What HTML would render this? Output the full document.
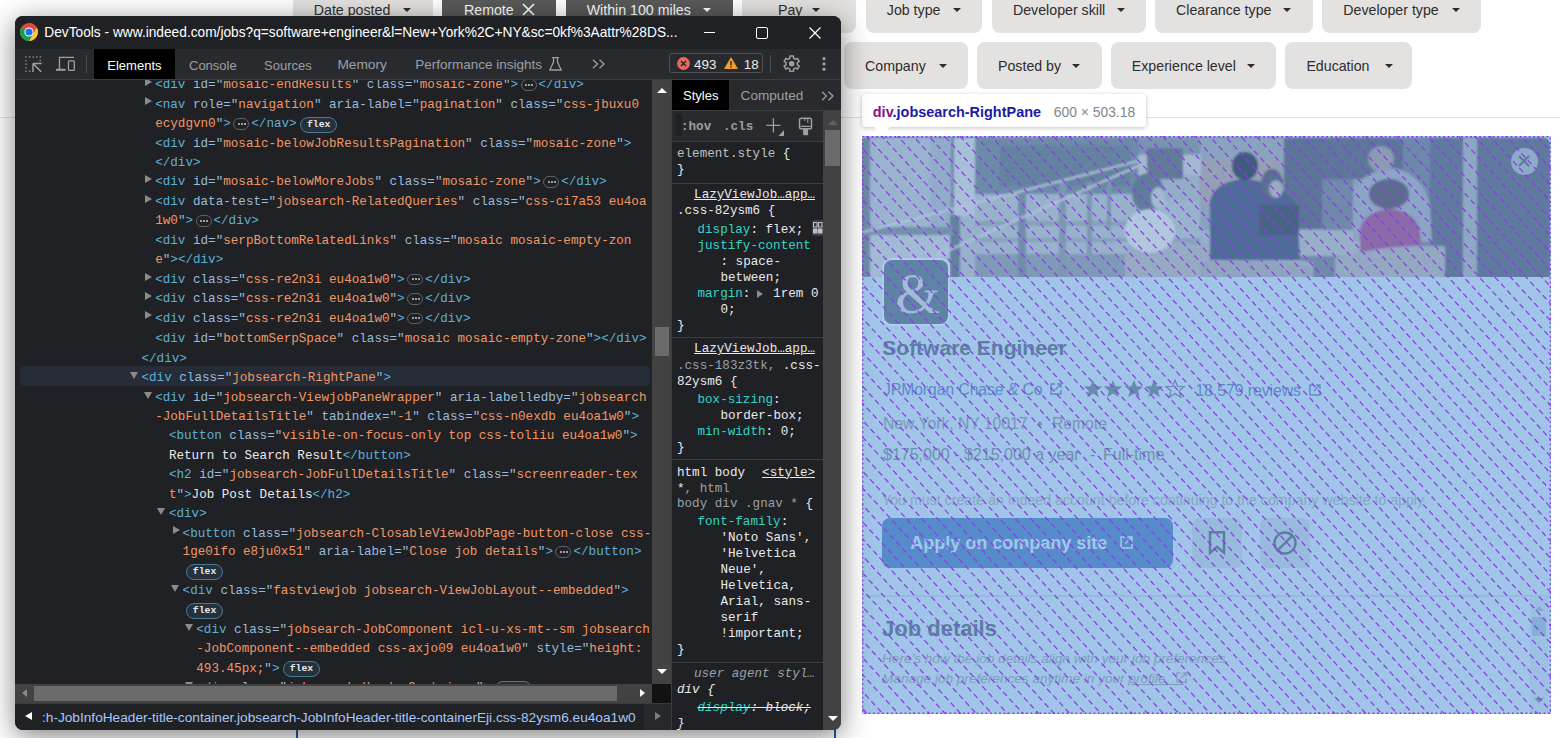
<!DOCTYPE html>
<html><head><meta charset="utf-8"><title>DevTools</title>
<style>
*{box-sizing:border-box;margin:0;padding:0}
html,body{width:1560px;height:738px;overflow:hidden;background:#fff;position:relative;font-family:"Liberation Sans",sans-serif}
.a{position:absolute}
/* page chips */
.chip{position:absolute;height:47px;background:#e4e2e0;border-radius:8px;color:#2d2d2d;font-size:14.2px;white-space:nowrap}
.chip .t{position:absolute;top:0;line-height:1}
.chip .c{position:absolute;width:0;height:0;border-left:4px solid transparent;border-right:4px solid transparent;border-top:4.5px solid #2d2d2d}
.chip.sel{background:#595959;color:#fff}
.hline{position:absolute;left:0;top:117px;width:1560px;height:1px;background:#e4e2e0}
/* job pane */
.pane{position:absolute;left:862px;top:136px;width:689px;height:578px;background:#a0c5e8;overflow:hidden}
.photo{position:absolute;left:0;top:1px;width:688px;height:140px;border-radius:6px 8px 0 0;overflow:hidden;background:#7f9dbd}
.tip{position:absolute;left:862px;top:94px;width:284px;height:33px;background:#fff;border-radius:3px;box-shadow:0 1px 4px rgba(0,0,0,.25);white-space:nowrap}
.tip .n{position:absolute;left:10.8px;top:10px;font-weight:bold;font-size:14.45px;color:#1a1aa6}
.tip .n i{font-style:normal;color:#881280}
.tip .d{position:absolute;left:191.7px;top:10px;font-size:13.9px;color:#80868b}
.arrow{position:absolute;left:874px;top:127px;width:0;height:0;border-left:8.5px solid transparent;border-right:8.5px solid transparent;border-top:9px solid #fff}
/* devtools */
.win{position:absolute;left:15px;top:16px;width:826px;height:714px;background:#202124;border-radius:8px;overflow:hidden;box-shadow:0 6px 28px rgba(0,0,0,.5)}
.mono{font-family:"Liberation Mono",monospace;font-size:12.6px}
.ln{position:absolute;white-space:pre;font-family:"Liberation Mono",monospace;font-size:12.6px;line-height:19.45px;height:19.45px}
.tg{color:#5db0d7}.an{color:#9bbbdc}.av{color:#f29766}.tx{color:#e8eaed}
.tri{position:absolute;width:0;height:0}
.tri.r{border-top:4px solid transparent;border-bottom:4px solid transparent;border-left:7px solid #8b8b8b}
.tri.d{border-left:4px solid transparent;border-right:4px solid transparent;border-bottom:0;border-top:7px solid #8b8b8b}
.ell{display:inline-block;vertical-align:top;width:16px;height:11.5px;border:1px solid #5f6368;border-radius:6px;margin:3px 2px 0 2.5px;position:relative}
.ell:before{content:"";position:absolute;left:3.5px;top:3.5px;width:2px;height:2px;background:#9aa0a6;box-shadow:3px 0 #9aa0a6,6px 0 #9aa0a6}
.flex{display:inline-block;vertical-align:top;width:37px;height:16px;border:1px solid #4a7a97;background:#25313b;border-radius:8px;color:#e8eaed;font-family:"Liberation Mono",monospace;font-size:9.8px;font-weight:bold;line-height:14px;text-align:center;margin:1.4px 0 0 3.5px}
.sl{position:absolute;white-space:pre;font-family:"Liberation Mono",monospace;font-size:12.6px;line-height:16px;height:16px;color:#e8eaed}
.pn{color:#35d4c7}.gr{color:#9aa0a6}

</style></head>
<body>
<div class="chip" style="left:293.3px;top:-14.2px;width:139.5px"><span class="t" style="left:20.5px;top:17.2px">Date posted</span><span class="c" style="left:109.7px;top:21.7px;border-top-color:#2d2d2d"></span></div>
<div class="chip sel" style="left:442px;top:-14.2px;width:114.0px"><span class="t" style="left:22.0px;top:17.2px">Remote</span><svg class="a" style="left:80px;top:17.5px" width="13" height="13" viewBox="0 0 13 13"><path d="M1 1L12 12M12 1L1 12" stroke="#fff" stroke-width="1.6"/></svg></div>
<div class="chip sel" style="left:566px;top:-14.2px;width:167.0px"><span class="t" style="left:20.7px;top:17.2px">Within 100 miles</span><span class="c" style="left:136.6px;top:21.7px;border-top-color:#fff"></span></div>
<div class="chip" style="left:742px;top:-14.2px;width:114.0px"><span class="t" style="left:36.0px;top:17.2px">Pay</span><span class="c" style="left:70.0px;top:21.7px;border-top-color:#2d2d2d"></span></div>
<div class="chip" style="left:866.3px;top:-14.2px;width:115.7px"><span class="t" style="left:20.5px;top:17.2px">Job type</span><span class="c" style="left:86.7px;top:21.7px;border-top-color:#2d2d2d"></span></div>
<div class="chip" style="left:991.8px;top:-14.2px;width:154.2px"><span class="t" style="left:21.2px;top:17.2px">Developer skill</span><span class="c" style="left:125.2px;top:21.7px;border-top-color:#2d2d2d"></span></div>
<div class="chip" style="left:1155px;top:-14.2px;width:158.0px"><span class="t" style="left:21.0px;top:17.2px">Clearance type</span><span class="c" style="left:128.0px;top:21.7px;border-top-color:#2d2d2d"></span></div>
<div class="chip" style="left:1322px;top:-14.2px;width:159.0px"><span class="t" style="left:21.3px;top:17.2px">Developer type</span><span class="c" style="left:130.0px;top:21.7px;border-top-color:#2d2d2d"></span></div>
<div class="chip" style="left:844px;top:42px;width:124.0px"><span class="t" style="left:21.0px;top:17.2px">Company</span><span class="c" style="left:95.0px;top:21.7px;border-top-color:#2d2d2d"></span></div>
<div class="chip" style="left:977px;top:42px;width:125.0px"><span class="t" style="left:21.0px;top:17.2px">Posted by</span><span class="c" style="left:95.0px;top:21.7px;border-top-color:#2d2d2d"></span></div>
<div class="chip" style="left:1111px;top:42px;width:165.0px"><span class="t" style="left:20.8px;top:17.2px">Experience level</span><span class="c" style="left:135.6px;top:21.7px;border-top-color:#2d2d2d"></span></div>
<div class="chip" style="left:1285px;top:42px;width:126.7px"><span class="t" style="left:21.4px;top:17.2px">Education</span><span class="c" style="left:100.0px;top:21.7px;border-top-color:#2d2d2d"></span></div>
<div class="hline"></div>
<div class="a" style="left:296px;top:700px;width:1.5px;height:40px;background:#2557a7"></div>
<div class="a" style="left:834px;top:700px;width:1.5px;height:40px;background:#2557a7"></div><div class="pane">
<div class="photo"><svg class="a" style="left:0;top:1px" width="688" height="140" viewBox="862 137 688 140"><defs><filter id="bl" x="-5%" y="-5%" width="110%" height="110%"><feGaussianBlur stdDeviation="1.3"/></filter></defs><g filter="url(#bl)"><rect x="862" y="137" width="688" height="140" fill="#86a2be"/><rect x="862" y="137" width="8" height="140" fill="#6d8aa8"/><rect x="870" y="137" width="60" height="89" fill="#9ab4cf"/><rect x="930" y="137" width="21" height="89" fill="#90acc9"/><rect x="951" y="137" width="3" height="140" fill="#6f8cab"/><rect x="954" y="137" width="21" height="78" fill="#a7c0d8"/><rect x="950" y="215" width="10" height="62" fill="#62809f"/><rect x="862" y="226" width="92" height="8" fill="#7390ae"/><rect x="870" y="234" width="80" height="43" fill="#a2bad3"/><rect x="960" y="215" width="15" height="62" fill="#98b1cb"/><rect x="975" y="137" width="164" height="56" fill="#6c8ba9"/><rect x="1000" y="145" width="130" height="40" fill="#64839f"/><rect x="975" y="193" width="164" height="84" fill="#98b2cc"/><rect x="975" y="220" width="153" height="5" fill="#86a1bd"/><rect x="975" y="237" width="153" height="4" fill="#86a1bd"/><rect x="975" y="253" width="153" height="24" fill="#7f9ab7"/><rect x="1018" y="193" width="8" height="84" fill="#6f8cab"/><rect x="1059" y="181" width="7" height="96" fill="#7b96b3"/><rect x="1087" y="181" width="5" height="72" fill="#7b96b3"/><rect x="1107" y="181" width="4" height="49" fill="#7b96b3"/><rect x="1139" y="137" width="61" height="16" fill="#7994b1"/><rect x="1139" y="174" width="61" height="26" fill="#94adc7"/><rect x="1139" y="200" width="61" height="37" fill="#9ab3cc"/><rect x="1200" y="137" width="85" height="23" fill="#8aa4bf"/><rect x="1201" y="158" width="81" height="47" fill="#94a0b4"/><rect x="1138" y="154" width="63" height="20" fill="#a3b8cf"/><rect x="1147" y="147" width="36" height="31" fill="#62799a"/><rect x="1284" y="137" width="38" height="91" fill="#5b7598"/><rect x="1322" y="137" width="81" height="41" fill="#5d769a"/><rect x="1322" y="178" width="31" height="52" fill="#6f88aa"/><rect x="1403" y="137" width="27" height="140" fill="#6e88ab"/><rect x="1430" y="137" width="33" height="140" fill="#60799e"/><rect x="1463" y="137" width="14" height="140" fill="#8ea7c3"/><rect x="1477" y="137" width="73" height="140" fill="#5e799f"/><rect x="1259" y="204" width="40" height="28" fill="#4f6a8f"/><rect x="1200" y="229" width="166" height="26" fill="#98afc8"/><rect x="1200" y="255" width="136" height="22" fill="#6f89aa"/><path d="M1125 277V250Q1130 238 1160 240L1215 245Q1250 248 1313 262V277Z" fill="#95abc4"/><path d="M1210 259V200Q1215 180 1245 178Q1285 182 1297 205L1300 259Z" fill="#4e6c97"/><path d="M1259 204H1299V234H1259Z" fill="#4a6487"/><path d="M1353 241V195Q1360 168 1395 167Q1425 175 1430 205L1432 241Z" fill="#8ca5c5"/><path d="M1360 259V228Q1365 210 1390 208Q1415 210 1420 230L1422 259Z" fill="#8a6aa8"/><path d="M1335 277V258Q1380 243 1445 245V277Z" fill="#93a8c1"/><path d="M1200 277V262Q1240 255 1311 265V277Z" fill="#8ea4bf"/><ellipse cx="1148" cy="192" rx="16" ry="20" fill="#5f7b9b"/><ellipse cx="1158" cy="197" rx="7" ry="11" fill="#a3b9cf"/><ellipse cx="1150" cy="230" rx="25" ry="22" fill="#b0c7de"/><ellipse cx="1272" cy="183" rx="11" ry="15" fill="#5a6f90"/><ellipse cx="1276" cy="188" rx="7" ry="9" fill="#9aaac0"/><ellipse cx="1245" cy="165" rx="13" ry="14" fill="#3f5a80"/><ellipse cx="1381" cy="158" rx="13" ry="13" fill="#8a9bb3"/><ellipse cx="1389" cy="193" rx="20" ry="15" fill="#5b6c8b"/><path d="M860 232L1138 160M936 255L1138 165" stroke="#adc4da" stroke-width="2" fill="none"/></g></svg>
<div class="a" style="left:648.5px;top:10.5px;width:27px;height:27px;border-radius:50%;background:#8eaacb"></div>
<svg class="a" style="left:656px;top:18px" width="12" height="12"><path d="M1 1L11 11M11 1L1 11" stroke="#5d7a9b" stroke-width="2"/></svg>
</div>
<div class="a" style="left:20.299999999999955px;top:121.80000000000001px;width:67.5px;height:67.8px;border-radius:9px;background:#b0cceb"></div>
<div class="a" style="left:22.299999999999955px;top:123.80000000000001px;width:63.5px;height:63.8px;border-radius:8px;background:#5f83a7;overflow:hidden"><span class="a" style="left:11px;top:5px;font-family:'Liberation Serif',serif;font-size:58px;line-height:1;color:#a2bcd7">&amp;</span></div>
<span class="a" style="left:20.3px;top:201.1px;font-size:21px;line-height:1;color:#5a7fa2;font-weight:bold;font-style:normal;white-space:nowrap;">Software Engineer</span>
<span class="a" style="left:21.0px;top:246.0px;font-size:15.6px;line-height:1;color:#5a8bc8;font-weight:normal;font-style:normal;white-space:nowrap;">JPMorgan Chase &amp; Co</span>
<svg class="a" style="left:188px;top:247px" width="12" height="12" viewBox="0 0 12 12"><path d="M5 1H1V11H11V7" stroke="#5a8bc8" stroke-width="1.4" fill="none"/><path d="M7 1H11V5M11 1L5 7" stroke="#5a8bc8" stroke-width="1.4" fill="none"/></svg>
<svg class="a" style="left:221.0px;top:243.3px" width="20" height="19" viewBox="0 0 20 19"><path d="M10 1.2L12.6 7.3L19.2 7.6L14.1 11.8L15.8 18.3L10 14.6L4.2 18.3L5.9 11.8L0.8 7.6L7.4 7.3Z" fill="#678cb0"/></svg>
<svg class="a" style="left:241.4px;top:243.3px" width="20" height="19" viewBox="0 0 20 19"><path d="M10 1.2L12.6 7.3L19.2 7.6L14.1 11.8L15.8 18.3L10 14.6L4.2 18.3L5.9 11.8L0.8 7.6L7.4 7.3Z" fill="#678cb0"/></svg>
<svg class="a" style="left:261.8px;top:243.3px" width="20" height="19" viewBox="0 0 20 19"><path d="M10 1.2L12.6 7.3L19.2 7.6L14.1 11.8L15.8 18.3L10 14.6L4.2 18.3L5.9 11.8L0.8 7.6L7.4 7.3Z" fill="#678cb0"/></svg>
<svg class="a" style="left:282.2px;top:243.3px" width="20" height="19" viewBox="0 0 20 19"><path d="M10 1.2L12.6 7.3L19.2 7.6L14.1 11.8L15.8 18.3L10 14.6L4.2 18.3L5.9 11.8L0.8 7.6L7.4 7.3Z" fill="#678cb0"/></svg>
<svg class="a" style="left:302.6px;top:243.3px" width="20" height="19" viewBox="0 0 20 19"><path d="M10 1.2L12.6 7.3L19.2 7.6L14.1 11.8L15.8 18.3L10 14.6L4.2 18.3L5.9 11.8L0.8 7.6L7.4 7.3Z" fill="none" stroke="#678cb0" stroke-width="1.3"/></svg>
<span class="a" style="left:333.4px;top:246.6px;font-size:15.7px;line-height:1;color:#5a8bc8;font-weight:normal;font-style:normal;white-space:nowrap;">18,579 reviews</span>
<svg class="a" style="left:447px;top:247.5px" width="12" height="12" viewBox="0 0 12 12"><path d="M5 1H1V11H11V7" stroke="#5a8bc8" stroke-width="1.4" fill="none"/><path d="M7 1H11V5M11 1L5 7" stroke="#5a8bc8" stroke-width="1.4" fill="none"/></svg>
<span class="a" style="left:21.0px;top:280.1px;font-size:15.7px;line-height:1;color:#7497b9;font-weight:normal;font-style:normal;white-space:nowrap;">New York, NY 10017</span>
<span class="a" style="left:175.0px;top:280.1px;font-size:15.7px;line-height:1;color:#7497b9;font-weight:normal;font-style:normal;white-space:nowrap;">•</span>
<span class="a" style="left:190.0px;top:280.1px;font-size:15.7px;line-height:1;color:#7497b9;font-weight:normal;font-style:normal;white-space:nowrap;">Remote</span>
<span class="a" style="left:21.0px;top:311.4px;font-size:16px;line-height:1;color:#6d90b3;font-weight:normal;font-style:normal;white-space:nowrap;">$175,000 - $215,000 a year</span>
<span class="a" style="left:228.0px;top:311.4px;font-size:16px;line-height:1;color:#6d90b3;font-weight:normal;font-style:normal;white-space:nowrap;">-</span>
<span class="a" style="left:241.0px;top:311.4px;font-size:16px;line-height:1;color:#6d90b3;font-weight:normal;font-style:normal;white-space:nowrap;">Full-time</span>
<span class="a" style="left:20.0px;top:356.7px;font-size:14.2px;line-height:1;color:#85a5c4;font-weight:normal;font-style:normal;white-space:nowrap;">You must create an Indeed account before continuing to the company website to apply</span>
<div class="a" style="left:20px;top:382px;width:291px;height:49.5px;border-radius:8px;background:#568cca"></div>
<span class="a" style="left:48.3px;top:398.2px;font-size:18px;line-height:1;color:#a3c7ea;font-weight:bold;font-style:normal;white-space:nowrap;">Apply on company site</span>
<svg class="a" style="left:258px;top:399.5px" width="13" height="13" viewBox="0 0 12 12"><path d="M5 1H1V11H11V7" stroke="#a3c7ea" stroke-width="1.4" fill="none"/><path d="M7 1H11V5M11 1L5 7" stroke="#a3c7ea" stroke-width="1.4" fill="none"/></svg>
<div class="a" style="left:330px;top:382px;width:50px;height:49.5px;border-radius:8px;background:#97badd"></div>
<div class="a" style="left:398px;top:382px;width:50px;height:49.5px;border-radius:8px;background:#97badd"></div>
<svg class="a" style="left:346px;top:394px" width="18" height="26" viewBox="0 0 18 26"><path d="M2 2.2H16V22.8L9 16.8L2 22.8Z" stroke="#5a7fa2" stroke-width="2.4" fill="none" stroke-linejoin="miter"/></svg>
<svg class="a" style="left:410px;top:394px" width="26" height="26" viewBox="0 0 26 26"><circle cx="13" cy="13" r="10.5" stroke="#5a7fa2" stroke-width="2.4" fill="none"/><path d="M5.6 20.4L20.4 5.6" stroke="#5a7fa2" stroke-width="2.4"/></svg>
<div class="a" style="left:0;top:458.5px;width:689px;height:2px;background:#96bade"></div>
<span class="a" style="left:20.0px;top:481.9px;font-size:22px;line-height:1;color:#5a7fa2;font-weight:bold;font-style:normal;white-space:nowrap;">Job details</span>
<span class="a" style="left:20.0px;top:515.9px;font-size:13.6px;line-height:1;color:#7d9dbd;font-weight:normal;font-style:italic;white-space:nowrap;">Here’s how the job details align with your job preferences.</span>
<span class="a" style="left:20.0px;top:536.2px;font-size:13.6px;line-height:1;color:#7d9dbd;font-weight:normal;font-style:italic;white-space:nowrap;">Manage job preferences anytime in your <u>profile&nbsp;&nbsp;&nbsp;&nbsp;&nbsp;</u>.</span>
<svg class="a" style="left:314px;top:535.5px" width="11" height="11" viewBox="0 0 12 12"><path d="M5 1H1V11H11V7" stroke="#7d9dbd" stroke-width="1.4" fill="none"/><path d="M7 1H11V5M11 1L5 7" stroke="#7d9dbd" stroke-width="1.4" fill="none"/></svg>
<div class="a" style="left:668px;top:460px;width:18px;height:117px;background:#9cc0e4"></div>
<div class="a" style="left:670px;top:481px;width:14px;height:19px;background:#87aed5"></div>
<div class="a" style="left:672px;top:470px;width:0;height:0;border-left:5px solid transparent;border-right:5px solid transparent;border-bottom:5px solid #82a7cd"></div>
<div class="a" style="left:672px;top:562px;width:0;height:0;border-left:5px solid transparent;border-right:5px solid transparent;border-top:5px solid #6f8fb1"></div>
<svg class="a" style="left:0;top:0" width="689" height="578"><g stroke="#8a3ee6" stroke-width="1.25" stroke-dasharray="5.6 3.535" fill="none"><path d="M-525.74 0L5.51 578" stroke-dashoffset="7.36"/><path d="M-510.15 0L21.10 578" stroke-dashoffset="8.78"/><path d="M-494.56 0L36.69 578" stroke-dashoffset="1.06"/><path d="M-478.97 0L52.28 578" stroke-dashoffset="2.47"/><path d="M-463.38 0L67.87 578" stroke-dashoffset="3.89"/><path d="M-447.79 0L83.46 578" stroke-dashoffset="5.30"/><path d="M-432.20 0L99.05 578" stroke-dashoffset="6.72"/><path d="M-416.61 0L114.64 578" stroke-dashoffset="8.13"/><path d="M-401.02 0L130.23 578" stroke-dashoffset="0.41"/><path d="M-385.43 0L145.82 578" stroke-dashoffset="1.82"/><path d="M-369.84 0L161.41 578" stroke-dashoffset="3.24"/><path d="M-354.25 0L177.00 578" stroke-dashoffset="4.65"/><path d="M-338.66 0L192.59 578" stroke-dashoffset="6.07"/><path d="M-323.07 0L208.18 578" stroke-dashoffset="7.48"/><path d="M-307.48 0L223.77 578" stroke-dashoffset="8.90"/><path d="M-291.89 0L239.36 578" stroke-dashoffset="1.18"/><path d="M-276.30 0L254.95 578" stroke-dashoffset="2.59"/><path d="M-260.71 0L270.54 578" stroke-dashoffset="4.01"/><path d="M-245.12 0L286.13 578" stroke-dashoffset="5.42"/><path d="M-229.53 0L301.72 578" stroke-dashoffset="6.84"/><path d="M-213.94 0L317.31 578" stroke-dashoffset="8.25"/><path d="M-198.35 0L332.90 578" stroke-dashoffset="0.53"/><path d="M-182.76 0L348.49 578" stroke-dashoffset="1.95"/><path d="M-167.17 0L364.08 578" stroke-dashoffset="3.36"/><path d="M-151.58 0L379.67 578" stroke-dashoffset="4.78"/><path d="M-135.99 0L395.26 578" stroke-dashoffset="6.19"/><path d="M-120.40 0L410.85 578" stroke-dashoffset="7.61"/><path d="M-104.81 0L426.44 578" stroke-dashoffset="9.02"/><path d="M-89.22 0L442.03 578" stroke-dashoffset="1.30"/><path d="M-73.63 0L457.62 578" stroke-dashoffset="2.72"/><path d="M-58.04 0L473.21 578" stroke-dashoffset="4.13"/><path d="M-42.45 0L488.80 578" stroke-dashoffset="5.55"/><path d="M-26.86 0L504.39 578" stroke-dashoffset="6.96"/><path d="M-11.27 0L519.98 578" stroke-dashoffset="8.38"/><path d="M4.32 0L535.57 578" stroke-dashoffset="0.66"/><path d="M19.91 0L551.16 578" stroke-dashoffset="2.07"/><path d="M35.50 0L566.75 578" stroke-dashoffset="3.49"/><path d="M51.09 0L582.34 578" stroke-dashoffset="4.90"/><path d="M66.68 0L597.93 578" stroke-dashoffset="6.31"/><path d="M82.27 0L613.52 578" stroke-dashoffset="7.73"/><path d="M97.86 0L629.11 578" stroke-dashoffset="0.01"/><path d="M113.45 0L644.70 578" stroke-dashoffset="1.42"/><path d="M129.04 0L660.29 578" stroke-dashoffset="2.84"/><path d="M144.63 0L675.88 578" stroke-dashoffset="4.25"/><path d="M160.22 0L691.47 578" stroke-dashoffset="5.67"/><path d="M175.81 0L707.06 578" stroke-dashoffset="7.08"/><path d="M191.40 0L722.65 578" stroke-dashoffset="8.50"/><path d="M206.99 0L738.24 578" stroke-dashoffset="0.78"/><path d="M222.58 0L753.83 578" stroke-dashoffset="2.19"/><path d="M238.17 0L769.42 578" stroke-dashoffset="3.61"/><path d="M253.76 0L785.01 578" stroke-dashoffset="5.02"/><path d="M269.35 0L800.60 578" stroke-dashoffset="6.44"/><path d="M284.94 0L816.19 578" stroke-dashoffset="7.85"/><path d="M300.53 0L831.78 578" stroke-dashoffset="0.13"/><path d="M316.12 0L847.37 578" stroke-dashoffset="1.55"/><path d="M331.71 0L862.96 578" stroke-dashoffset="2.96"/><path d="M347.30 0L878.55 578" stroke-dashoffset="4.38"/><path d="M362.89 0L894.14 578" stroke-dashoffset="5.79"/><path d="M378.48 0L909.73 578" stroke-dashoffset="7.21"/><path d="M394.07 0L925.32 578" stroke-dashoffset="8.62"/><path d="M409.66 0L940.91 578" stroke-dashoffset="0.90"/><path d="M425.25 0L956.50 578" stroke-dashoffset="2.32"/><path d="M440.84 0L972.09 578" stroke-dashoffset="3.73"/><path d="M456.43 0L987.68 578" stroke-dashoffset="5.15"/><path d="M472.02 0L1003.27 578" stroke-dashoffset="6.56"/><path d="M487.61 0L1018.86 578" stroke-dashoffset="7.98"/><path d="M503.20 0L1034.45 578" stroke-dashoffset="0.25"/><path d="M518.79 0L1050.04 578" stroke-dashoffset="1.67"/><path d="M534.38 0L1065.63 578" stroke-dashoffset="3.08"/><path d="M549.97 0L1081.22 578" stroke-dashoffset="4.50"/><path d="M565.56 0L1096.81 578" stroke-dashoffset="5.91"/><path d="M581.15 0L1112.40 578" stroke-dashoffset="7.33"/><path d="M596.74 0L1127.99 578" stroke-dashoffset="8.74"/><path d="M612.33 0L1143.58 578" stroke-dashoffset="1.02"/><path d="M627.92 0L1159.17 578" stroke-dashoffset="2.44"/><path d="M643.51 0L1174.76 578" stroke-dashoffset="3.85"/><path d="M659.10 0L1190.35 578" stroke-dashoffset="5.27"/><path d="M674.69 0L1205.94 578" stroke-dashoffset="6.68"/><path d="M690.28 0L1221.53 578" stroke-dashoffset="8.10"/></g><rect x="0.75" y="0.75" width="687.5" height="576.5" fill="none" stroke="#8a2be2" stroke-width="1.3" stroke-dasharray="1.6 2.9"/></svg>
</div>
<div class="tip"><span class="n"><i>div</i>.jobsearch-RightPane</span><span class="d">600 × 503.18</span></div><div class="arrow"></div><div class="win">
<div class="a" style="left:0;top:0;width:826px;height:33px;background:#202124"></div>
<svg class="a" style="left:5px;top:7px" width="18" height="18" viewBox="-9 -9 18 18"><circle r="9" fill="#dd4b3e"/><path d="M0 0L-7.79 4.5A9 9 0 0 1 -7.79 -4.5Z" fill="#1e9e4b"/><path d="M0 -9A9 9 0 0 1 7.79 -4.5L3.9 2.25L-3.9 -2.25A4.5 4.5 0 0 0 0 -4.5Z" fill="#dd4b3e"/><path d="M-7.79 -4.5L-3.9 2.25L0 9A9 9 0 0 1 -7.79 -4.5Z" fill="#1e9e4b"/><path d="M7.79 -4.5A9 9 0 0 1 0 9L3.9 2.25Z" fill="#fcc934"/><path d="M0 9L3.9 2.25L-3.9 2.25L-7.79 4.5A9 9 0 0 0 0 9Z" fill="#1e9e4b"/><circle r="4.6" fill="#fff"/><circle r="3.6" fill="#1a73e8"/></svg>
<div class="a" style="left:29.299999999999997px;top:9.2px;font-size:13.72px;line-height:normal;color:#fff;white-space:nowrap">DevTools - www.indeed.com/jobs?q=software+engineer&amp;l=New+York%2C+NY&amp;sc=0kf%3Aattr%28DS...</div>
<div class="a" style="left:689px;top:16px;width:11px;height:1.2px;background:#fff"></div>
<div class="a" style="left:741px;top:11px;width:12px;height:11.5px;border:1.2px solid #fff;border-radius:2px"></div>
<svg class="a" style="left:794px;top:11px" width="12" height="12"><path d="M0.5 0.5L11.5 11.5M11.5 0.5L0.5 11.5" stroke="#fff" stroke-width="1.2"/></svg>
<div class="a" style="left:0;top:33px;width:826px;height:30px;background:#292a2d"></div>
<div class="a" style="left:0;top:63px;width:826px;height:1px;background:#3c3d40"></div>
<svg class="a" style="left:10px;top:39.5px" width="18" height="17" viewBox="0 0 18 17"><g fill="#9aa0a6"><rect x="0.3" y="0.3" width="1.3" height="1.3"/><rect x="3.9" y="0.3" width="1.3" height="1.3"/><rect x="7.5" y="0.3" width="1.3" height="1.3"/><rect x="11.1" y="0.3" width="1.3" height="1.3"/><rect x="14.6" y="0.3" width="1.3" height="1.3"/><rect x="0.3" y="3.9" width="1.3" height="1.3"/><rect x="0.3" y="7.5" width="1.3" height="1.3"/><rect x="0.3" y="11.1" width="1.3" height="1.3"/><rect x="0.3" y="14.6" width="1.3" height="1.3"/><rect x="14.6" y="3.9" width="1.3" height="1.3"/><rect x="3.9" y="14.6" width="1.3" height="1.3"/></g><path d="M8 7.5H16.7M8 7.2V16M8.3 7.8L16.2 15.7" stroke="#9aa0a6" stroke-width="1.5" fill="none"/></svg>
<svg class="a" style="left:40px;top:40px" width="21" height="16" viewBox="0 0 21 16"><path d="M4.5 13V1.3H19" stroke="#9aa0a6" stroke-width="1.3" fill="none"/><rect x="1" y="12.8" width="9.5" height="2" fill="#9aa0a6"/><rect x="13.5" y="4.8" width="5.8" height="9.6" rx="1" stroke="#9aa0a6" stroke-width="1.3" fill="none"/></svg>
<div class="a" style="left:71px;top:39px;width:1px;height:18px;background:#4a4c50"></div>
<div class="a" style="left:79px;top:33px;width:81px;height:30px;background:#000"></div>
<div class="a" style="left:92.3px;top:41.6px;font-size:13px;line-height:normal;color:#fff;white-space:nowrap">Elements</div>
<div class="a" style="left:174px;top:41.6px;font-size:13px;line-height:normal;color:#9aa0a6;white-space:nowrap">Console</div>
<div class="a" style="left:249px;top:41.6px;font-size:13px;line-height:normal;color:#9aa0a6;white-space:nowrap">Sources</div>
<div class="a" style="left:322.4px;top:41.0px;font-size:13.7px;line-height:normal;color:#9aa0a6;white-space:nowrap">Memory</div>
<div class="a" style="left:400.3px;top:41.2px;font-size:13.5px;line-height:normal;color:#9aa0a6;white-space:nowrap">Performance insights</div>
<svg class="a" style="left:534px;top:41px" width="13" height="14" viewBox="0 0 13 14"><path d="M3 0.7H10M4.5 0.7V5L0.8 13H12.2L8.5 5V0.7" stroke="#9aa0a6" stroke-width="1.3" fill="none"/></svg>
<svg class="a" style="left:576.5px;top:43px" width="14" height="10" viewBox="0 0 14 10"><path d="M1 0.7L5.5 5L1 9.3M7.5 0.7L12 5L7.5 9.3" stroke="#9aa0a6" stroke-width="1.3" fill="none"/></svg>
<div class="a" style="left:654.2px;top:37.2px;width:93.5px;height:19.4px;border:1px solid #4d4f52;border-radius:3px"></div>
<svg class="a" style="left:661.5px;top:40.8px" width="13" height="13" viewBox="0 0 13 13"><circle cx="6.5" cy="6.5" r="6.4" fill="#e46962"/><path d="M4 4L9 9M9 4L4 9" stroke="#202124" stroke-width="1.3"/></svg>
<div class="a" style="left:679px;top:40.7px;font-size:13.4px;line-height:normal;color:#e8eaed">493</div>
<svg class="a" style="left:709px;top:41px" width="14" height="12" viewBox="0 0 14 12"><path d="M7 0L14 12H0Z" fill="#f0a030"/><rect x="6.3" y="4" width="1.4" height="4.3" fill="#202124"/><rect x="6.3" y="9.2" width="1.4" height="1.4" fill="#202124"/></svg>
<div class="a" style="left:728.7px;top:40.7px;font-size:13.4px;line-height:normal;color:#e8eaed">18</div>
<div class="a" style="left:755px;top:39px;width:1px;height:18px;background:#4a4c50"></div>
<svg class="a" style="left:767.9px;top:39px" width="17.4" height="17.4" viewBox="-8.7 -8.7 17.4 17.4"><path d="M-1.86 -5.39L-1.78 -7.70L1.78 -7.70L1.86 -5.39L2.85 -4.94L3.74 -4.30L5.78 -5.39L7.55 -2.31L5.60 -1.09L5.70 0.00L5.60 1.09L7.55 2.31L5.78 5.39L3.74 4.30L2.85 4.94L1.86 5.39L1.78 7.70L-1.78 7.70L-1.86 5.39L-2.85 4.94L-3.74 4.30L-5.78 5.39L-7.55 2.31L-5.60 1.09L-5.70 0.00L-5.60 -1.09L-7.55 -2.31L-5.78 -5.39L-3.74 -4.30L-2.85 -4.94Z" fill="none" stroke="#9aa0a6" stroke-width="1.5" stroke-linejoin="round"/><circle r="2.8" fill="#9aa0a6"/></svg>
<svg class="a" style="left:806.7px;top:40.6px" width="4" height="14" viewBox="0 0 4 14"><circle cx="2" cy="1.7" r="1.6" fill="#9aa0a6"/><circle cx="2" cy="6.9" r="1.6" fill="#9aa0a6"/><circle cx="2" cy="12.2" r="1.6" fill="#9aa0a6"/></svg><div class="a" style="left:0;top:64px;width:637px;height:604px;background:#202124;overflow:hidden">
<div class="a" style="left:5px;top:286.00px;width:630px;height:20px;border-radius:5px;background:#262c38"></div>
<div class="ln" style="left:140.20px;top:-3.79px"><span class="tg">&lt;div</span><span class="an"> </span><span class="an">id=</span><span class="an">"</span><span class="av">mosaic-endResults</span><span class="an">"</span><span class="an"> </span><span class="an">class=</span><span class="an">"</span><span class="av">mosaic-zone</span><span class="an">"</span><span class="tg">&gt;</span><span class="ell"></span><span class="tg">&lt;/div</span><span class="tg">&gt;</span></div>
<div class="tri r" style="left:130.20px;top:-2.00px"></div>
<div class="ln" style="left:140.20px;top:15.66px"><span class="tg">&lt;nav</span><span class="an"> </span><span class="an">role=</span><span class="an">"</span><span class="av">navigation</span><span class="an">"</span><span class="an"> </span><span class="an">aria-label=</span><span class="an">"</span><span class="av">pagination</span><span class="an">"</span><span class="an"> </span><span class="an">class=</span><span class="an">"</span><span class="av">css-jbuxu0</span></div>
<div class="tri r" style="left:130.20px;top:17.45px"></div>
<div class="ln" style="left:140.20px;top:35.11px"><span class="av">ecydgvn0</span><span class="an">"</span><span class="tg">&gt;</span><span class="ell"></span><span class="tg">&lt;/nav</span><span class="tg">&gt;</span><span class="flex">flex</span></div>
<div class="ln" style="left:140.20px;top:54.56px"><span class="tg">&lt;div</span><span class="an"> </span><span class="an">id=</span><span class="an">"</span><span class="av">mosaic-belowJobResultsPagination</span><span class="an">"</span><span class="an"> </span><span class="an">class=</span><span class="an">"</span><span class="av">mosaic-zone</span><span class="an">"</span><span class="tg">&gt;</span></div>
<div class="ln" style="left:140.20px;top:74.01px"><span class="tg">&lt;/div</span><span class="tg">&gt;</span></div>
<div class="ln" style="left:140.20px;top:93.46px"><span class="tg">&lt;div</span><span class="an"> </span><span class="an">id=</span><span class="an">"</span><span class="av">mosaic-belowMoreJobs</span><span class="an">"</span><span class="an"> </span><span class="an">class=</span><span class="an">"</span><span class="av">mosaic-zone</span><span class="an">"</span><span class="tg">&gt;</span><span class="ell"></span><span class="tg">&lt;/div</span><span class="tg">&gt;</span></div>
<div class="tri r" style="left:130.20px;top:95.25px"></div>
<div class="ln" style="left:140.20px;top:112.91px"><span class="tg">&lt;div</span><span class="an"> </span><span class="an">data-test=</span><span class="an">"</span><span class="av">jobsearch-RelatedQueries</span><span class="an">"</span><span class="an"> </span><span class="an">class=</span><span class="an">"</span><span class="av">css-ci7a53 eu4oa</span></div>
<div class="tri r" style="left:130.20px;top:114.70px"></div>
<div class="ln" style="left:140.20px;top:132.36px"><span class="av">1w0</span><span class="an">"</span><span class="tg">&gt;</span><span class="ell"></span><span class="tg">&lt;/div</span><span class="tg">&gt;</span></div>
<div class="ln" style="left:140.20px;top:151.81px"><span class="tg">&lt;div</span><span class="an"> </span><span class="an">id=</span><span class="an">"</span><span class="av">serpBottomRelatedLinks</span><span class="an">"</span><span class="an"> </span><span class="an">class=</span><span class="an">"</span><span class="av">mosaic mosaic-empty-zon</span></div>
<div class="ln" style="left:140.20px;top:171.26px"><span class="av">e</span><span class="an">"</span><span class="tg">&gt;</span><span class="tg">&lt;/div</span><span class="tg">&gt;</span></div>
<div class="ln" style="left:140.20px;top:190.71px"><span class="tg">&lt;div</span><span class="an"> </span><span class="an">class=</span><span class="an">"</span><span class="av">css-re2n3i eu4oa1w0</span><span class="an">"</span><span class="tg">&gt;</span><span class="ell"></span><span class="tg">&lt;/div</span><span class="tg">&gt;</span></div>
<div class="tri r" style="left:130.20px;top:192.50px"></div>
<div class="ln" style="left:140.20px;top:210.16px"><span class="tg">&lt;div</span><span class="an"> </span><span class="an">class=</span><span class="an">"</span><span class="av">css-re2n3i eu4oa1w0</span><span class="an">"</span><span class="tg">&gt;</span><span class="ell"></span><span class="tg">&lt;/div</span><span class="tg">&gt;</span></div>
<div class="tri r" style="left:130.20px;top:211.95px"></div>
<div class="ln" style="left:140.20px;top:229.61px"><span class="tg">&lt;div</span><span class="an"> </span><span class="an">class=</span><span class="an">"</span><span class="av">css-re2n3i eu4oa1w0</span><span class="an">"</span><span class="tg">&gt;</span><span class="ell"></span><span class="tg">&lt;/div</span><span class="tg">&gt;</span></div>
<div class="tri r" style="left:130.20px;top:231.40px"></div>
<div class="ln" style="left:140.20px;top:250.06px"><span class="tg">&lt;div</span><span class="an"> </span><span class="an">id=</span><span class="an">"</span><span class="av">bottomSerpSpace</span><span class="an">"</span><span class="an"> </span><span class="an">class=</span><span class="an">"</span><span class="av">mosaic mosaic-empty-zone</span><span class="an">"</span><span class="tg">&gt;</span><span class="tg">&lt;/div</span><span class="tg">&gt;</span></div>
<div class="ln" style="left:126.50px;top:269.51px"><span class="tg">&lt;/div</span><span class="tg">&gt;</span></div>
<div class="ln" style="left:126.50px;top:289.46px"><span class="tg">&lt;div</span><span class="an"> </span><span class="an">class=</span><span class="an">"</span><span class="av">jobsearch-RightPane</span><span class="an">"</span><span class="tg">&gt;</span></div>
<div class="tri d" style="left:115.00px;top:292.25px"></div>
<div class="ln" style="left:140.20px;top:308.91px"><span class="tg">&lt;div</span><span class="an"> </span><span class="an">id=</span><span class="an">"</span><span class="av">jobsearch-ViewjobPaneWrapper</span><span class="an">"</span><span class="an"> </span><span class="an">aria-labelledby=</span><span class="an">"</span><span class="av">jobsearch</span></div>
<div class="tri d" style="left:128.70px;top:311.70px"></div>
<div class="ln" style="left:140.20px;top:327.86px"><span class="av">-JobFullDetailsTitle</span><span class="an">"</span><span class="an"> </span><span class="an">tabindex=</span><span class="an">"</span><span class="av">-1</span><span class="an">"</span><span class="an"> </span><span class="an">class=</span><span class="an">"</span><span class="av">css-n0exdb eu4oa1w0</span><span class="an">"</span><span class="tg">&gt;</span></div>
<div class="ln" style="left:153.90px;top:347.31px"><span class="tg">&lt;button</span><span class="an"> </span><span class="an">class=</span><span class="an">"</span><span class="av">visible-on-focus-only top css-toliiu eu4oa1w0</span><span class="an">"</span><span class="tg">&gt;</span></div>
<div class="ln" style="left:153.90px;top:366.76px"><span class="tx">Return to Search Result</span><span class="tg">&lt;/button</span><span class="tg">&gt;</span></div>
<div class="ln" style="left:153.90px;top:386.21px"><span class="tg">&lt;h2</span><span class="an"> </span><span class="an">id=</span><span class="an">"</span><span class="av">jobsearch-JobFullDetailsTitle</span><span class="an">"</span><span class="an"> </span><span class="an">class=</span><span class="an">"</span><span class="av">screenreader-tex</span></div>
<div class="ln" style="left:153.90px;top:405.66px"><span class="av">t</span><span class="an">"</span><span class="tg">&gt;</span><span class="tx">Job Post Details</span><span class="tg">&lt;/h2</span><span class="tg">&gt;</span></div>
<div class="ln" style="left:153.90px;top:425.11px"><span class="tg">&lt;div</span><span class="tg">&gt;</span></div>
<div class="tri d" style="left:142.40px;top:427.90px"></div>
<div class="ln" style="left:167.60px;top:444.56px"><span class="tg">&lt;button</span><span class="an"> </span><span class="an">class=</span><span class="an">"</span><span class="av">jobsearch-ClosableViewJobPage-button-close css-</span></div>
<div class="tri r" style="left:157.60px;top:446.35px"></div>
<div class="ln" style="left:167.60px;top:463.01px"><span class="av">1ge0ifo e8ju0x51</span><span class="an">"</span><span class="an"> </span><span class="an">aria-label=</span><span class="an">"</span><span class="av">Close job details</span><span class="an">"</span><span class="tg">&gt;</span><span class="ell"></span><span class="tg">&lt;/button</span><span class="tg">&gt;</span></div>
<div class="ln" style="left:167.60px;top:482.46px"><span class="flex">flex</span></div>
<div class="ln" style="left:167.60px;top:501.91px"><span class="tg">&lt;div</span><span class="an"> </span><span class="an">class=</span><span class="an">"</span><span class="av">fastviewjob jobsearch-ViewJobLayout--embedded</span><span class="an">"</span><span class="tg">&gt;</span></div>
<div class="tri d" style="left:156.10px;top:504.70px"></div>
<div class="ln" style="left:167.60px;top:521.36px"><span class="flex">flex</span></div>
<div class="ln" style="left:181.30px;top:540.81px"><span class="tg">&lt;div</span><span class="an"> </span><span class="an">class=</span><span class="an">"</span><span class="av">jobsearch-JobComponent icl-u-xs-mt--sm jobsearch</span></div>
<div class="tri d" style="left:169.80px;top:543.60px"></div>
<div class="ln" style="left:181.30px;top:560.26px"><span class="av">-JobComponent--embedded css-axjo09 eu4oa1w0</span><span class="an">"</span><span class="an"> </span><span class="an">style=</span><span class="an">"</span><span class="av">height:</span></div>
<div class="ln" style="left:181.30px;top:579.71px"><span class="av">493.45px;</span><span class="an">"</span><span class="tg">&gt;</span><span class="flex">flex</span></div>
<div class="ln" style="left:181.30px;top:599.16px"><span class="tg">&lt;div</span><span class="an"> </span><span class="an">class=</span><span class="an">"</span><span class="av">jobsearch-HeaderContainer</span><span class="an">"</span><span class="tg">&gt;</span><span class="flex">flex</span></div>
<div class="tri d" style="left:169.80px;top:601.95px"></div>
</div>
<div class="a" style="left:637px;top:64px;width:19px;height:604px;background:#424242"></div>
<div class="a" style="left:639.5px;top:311px;width:14px;height:29px;background:#6b6b6b"></div>
<div class="a" style="left:641.5px;top:71.8px;width:0;height:0;border-left:5px solid transparent;border-right:5px solid transparent;border-bottom:5.5px solid #fff"></div>
<div class="a" style="left:641.5px;top:652.5px;width:0;height:0;border-left:5px solid transparent;border-right:5px solid transparent;border-top:5.5px solid #fff"></div>
<div class="a" style="left:0;top:668px;width:637px;height:19px;background:#424242"></div>
<div class="a" style="left:19px;top:670px;width:583px;height:15px;background:#6b6b6b"></div>
<div class="a" style="left:7px;top:673px;width:0;height:0;border-top:4.5px solid transparent;border-bottom:4.5px solid transparent;border-right:5.5px solid #8b8b8b"></div>
<div class="a" style="left:624.7px;top:673px;width:0;height:0;border-top:4.5px solid transparent;border-bottom:4.5px solid transparent;border-left:5.5px solid #fff"></div>
<div class="a" style="left:637px;top:668px;width:19px;height:19px;background:#121212"></div>
<div class="a" style="left:0;top:687px;width:656px;height:1px;background:#3a3b3e"></div>
<div class="a" style="left:0;top:688px;width:656px;height:26px;background:#202124"></div>
<div class="a" style="left:629px;top:688px;width:27px;height:26px;background:#27282b"></div>
<div class="a" style="left:10px;top:696px;width:0;height:0;border-top:4.5px solid transparent;border-bottom:4.5px solid transparent;border-right:7px solid #fff"></div>
<div class="a" style="left:640px;top:696px;width:0;height:0;border-top:4.5px solid transparent;border-bottom:4.5px solid transparent;border-left:6px solid #7a7d82"></div>
<div class="a" style="left:27px;top:694.1px;font-size:13.67px;line-height:normal;color:#a8c7fa;white-space:nowrap">:h-JobInfoHeader-title-container.jobsearch-JobInfoHeader-title-containerEji.css-82ysm6.eu4oa1w0</div>
<div class="a" style="left:656px;top:64px;width:1px;height:650px;background:#3c3d40"></div><div class="a" style="left:657px;top:64px;width:169px;height:30px;background:#292a2d"></div>
<div class="a" style="left:657px;top:64px;width:57px;height:30px;background:#000"></div>
<div class="a" style="left:668px;top:72.2px;font-size:13px;line-height:normal;color:#fff;white-space:nowrap">Styles</div>
<div class="a" style="left:725.6px;top:71.7px;font-size:13.6px;line-height:normal;color:#9aa0a6;white-space:nowrap">Computed</div>
<svg class="a" style="left:806px;top:75px" width="14" height="10" viewBox="0 0 14 10"><path d="M1 0.7L5.5 5L1 9.3M7.5 0.7L12 5L7.5 9.3" stroke="#9aa0a6" stroke-width="1.3" fill="none"/></svg>
<div class="a" style="left:657px;top:94px;width:169px;height:1px;background:#3c3d40"></div>
<div class="a" style="left:657px;top:95px;width:151px;height:30px;background:#292a2d"></div>
<div class="a" style="left:660px;top:98px;width:7px;height:22px;background:#202124"></div>
<div class="sl" style="left:666.00px;top:102.64px;"><span style="color:#9aa0a6;font-weight:bold">:hov</span></div>
<div class="sl" style="left:708.00px;top:102.64px;"><span style="color:#9aa0a6;font-weight:bold">.cls</span></div>
<svg class="a" style="left:751px;top:102px" width="19" height="19" viewBox="0 0 19 19"><path d="M7.4 0.3V14.5M0.3 7.4H14.5" stroke="#9aa0a6" stroke-width="1.3"/><path d="M18 12V18H12.5Z" fill="#9aa0a6"/></svg>
<svg class="a" style="left:783px;top:101px" width="15" height="19" viewBox="0 0 15 19"><rect x="1.5" y="1.2" width="12" height="10.5" rx="1.8" stroke="#9aa0a6" stroke-width="1.5" fill="none"/><path d="M2.6 9.3H12.4" stroke="#9aa0a6" stroke-width="1.2"/><path d="M6.8 2V3.8M9.8 2V5.8" stroke="#9aa0a6" stroke-width="1.1"/><rect x="5.1" y="11.5" width="5" height="6.8" rx="1" fill="#9aa0a6"/></svg>
<div class="a" style="left:657px;top:125px;width:151px;height:1px;background:#3c3d40"></div>
<div class="sl" style="left:662.00px;top:129.64px;"><span style="color:#bdc1c6">element.style</span><span style="color:#e8eaed"> {</span></div>
<div class="sl" style="left:662.00px;top:145.64px;"><span style="color:#e8eaed">}</span></div>
<div class="sl" style="left:662.00px;top:187.34px;"><span style="color:#e8eaed">.css-82ysm6 {</span></div>
<div class="sl" style="left:682.50px;top:205.64px;"><span style="color:#35d4c7">display</span><span style="color:#e8eaed">: flex;</span></div>
<div class="sl" style="left:682.50px;top:221.64px;"><span style="color:#35d4c7">justify-content</span></div>
<div class="sl" style="left:705.50px;top:237.64px;"><span style="color:#e8eaed">: space-</span></div>
<div class="sl" style="left:705.50px;top:253.64px;"><span style="color:#e8eaed">between;</span></div>
<div class="sl" style="left:682.50px;top:269.64px;"><span style="color:#35d4c7">margin</span><span style="color:#e8eaed">:   1rem 0</span></div>
<div class="sl" style="left:705.50px;top:285.64px;"><span style="color:#e8eaed">0;</span></div>
<div class="sl" style="left:662.00px;top:301.64px;"><span style="color:#e8eaed">}</span></div>
<div class="sl" style="left:662.00px;top:341.94px;"><span style="color:#9aa0a6">.css-183z3tk,</span><span style="color:#e8eaed"> .css-</span></div>
<div class="sl" style="left:662.00px;top:358.14px;"><span style="color:#e8eaed">82ysm6 {</span></div>
<div class="sl" style="left:682.50px;top:376.04px;"><span style="color:#35d4c7">box-sizing</span><span style="color:#e8eaed">:</span></div>
<div class="sl" style="left:705.50px;top:391.94px;"><span style="color:#e8eaed">border-box;</span></div>
<div class="sl" style="left:682.50px;top:407.74px;"><span style="color:#35d4c7">min-width</span><span style="color:#e8eaed">: 0;</span></div>
<div class="sl" style="left:662.00px;top:423.64px;"><span style="color:#e8eaed">}</span></div>
<div class="sl" style="left:662.00px;top:448.64px;"><span style="color:#e8eaed">html body</span></div>
<div class="sl" style="left:662.00px;top:464.64px;"><span style="color:#e8eaed">*</span><span style="color:#9aa0a6">, html</span></div>
<div class="sl" style="left:662.00px;top:480.34px;"><span style="color:#9aa0a6">body div .gnav *</span><span style="color:#e8eaed"> {</span></div>
<div class="sl" style="left:682.50px;top:498.24px;"><span style="color:#35d4c7">font-family</span><span style="color:#e8eaed">:</span></div>
<div class="sl" style="left:705.50px;top:514.24px;"><span style="color:#e8eaed">'Noto Sans',</span></div>
<div class="sl" style="left:705.50px;top:530.24px;"><span style="color:#e8eaed">'Helvetica</span></div>
<div class="sl" style="left:705.50px;top:546.24px;"><span style="color:#e8eaed">Neue',</span></div>
<div class="sl" style="left:705.50px;top:562.24px;"><span style="color:#e8eaed">Helvetica,</span></div>
<div class="sl" style="left:705.50px;top:578.24px;"><span style="color:#e8eaed">Arial, sans-</span></div>
<div class="sl" style="left:705.50px;top:594.24px;"><span style="color:#e8eaed">serif</span></div>
<div class="sl" style="left:705.50px;top:610.24px;"><span style="color:#e8eaed">!important;</span></div>
<div class="sl" style="left:662.00px;top:626.24px;"><span style="color:#e8eaed">}</span></div>
<div class="sl" style="left:679.00px;top:650.24px;"><i style="color:#9aa0a6">user agent styl…</i></div>
<div class="sl" style="left:662.00px;top:666.14px;"><i style="color:#e8eaed">div {</i></div>
<div class="sl" style="left:682.50px;top:684.14px;"><i style="text-decoration:line-through;text-decoration-color:#e8eaed"><span style="color:#35d4c7">display</span><span style="color:#e8eaed">: block;</span></i></div>
<div class="sl" style="left:662.00px;top:700.14px;"><i style="color:#e8eaed">}</i></div>
<div class="sl" style="right:26px;top:171.04px;text-decoration:underline;color:#e8eaed">LazyViewJob…app…</div>
<div class="sl" style="right:26px;top:325.34px;text-decoration:underline;color:#e8eaed">LazyViewJob…app…</div>
<div class="sl" style="right:26px;top:448.64px;text-decoration:underline;color:#e8eaed">&lt;style&gt;</div>
<div class="a" style="left:742px;top:273.5px;width:0;height:0;border-top:4.5px solid transparent;border-bottom:4.5px solid transparent;border-left:6px solid #8b8b8b"></div>
<div class="a" style="left:796.5px;top:204px;width:12px;height:16px;background:#3c3d40;border-radius:2px"></div>
<svg class="a" style="left:797.5px;top:206px" width="10" height="12" viewBox="0 0 10 12"><rect x="0.5" y="0.5" width="3.5" height="4.5" stroke="#bdc1c6" fill="none"/><rect x="5.5" y="0.5" width="3.5" height="4.5" stroke="#bdc1c6" fill="none"/><rect x="0" y="6.5" width="4.5" height="5" fill="#bdc1c6"/><rect x="5" y="6.5" width="4.5" height="5" fill="#bdc1c6"/></svg>
<div class="a" style="left:657px;top:167px;width:151px;height:1px;background:#3c3d40"></div>
<div class="a" style="left:657px;top:320.5px;width:151px;height:1px;background:#3c3d40"></div>
<div class="a" style="left:657px;top:443px;width:151px;height:1px;background:#3c3d40"></div>
<div class="a" style="left:657px;top:645.5px;width:151px;height:1px;background:#3c3d40"></div>
<div class="a" style="left:808px;top:95px;width:18px;height:619px;background:#424242"></div>
<div class="a" style="left:810px;top:114px;width:15px;height:36px;background:#6b6b6b"></div>
<div class="a" style="left:812.5px;top:103.5px;width:0;height:0;border-left:5px solid transparent;border-right:5px solid transparent;border-bottom:5px solid #5f6368"></div>
<div class="a" style="left:812.5px;top:700px;width:0;height:0;border-left:5.5px solid transparent;border-right:5.5px solid transparent;border-top:5.5px solid #fff"></div>
</div>
</body></html>
